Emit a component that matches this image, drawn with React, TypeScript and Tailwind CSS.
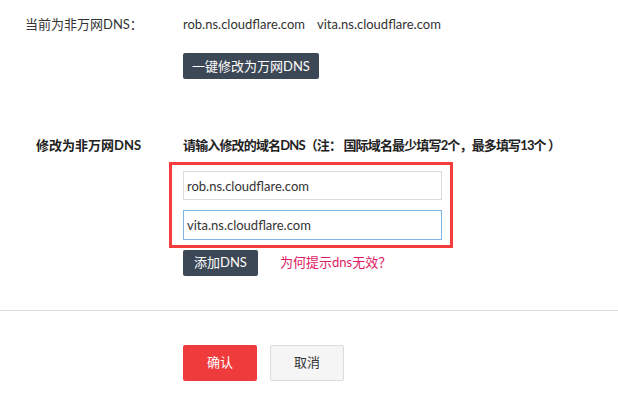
import React from "react";

const App = () => {
  return (
    <div
      className="w-[618px] h-[402px] bg-white text-[13px] text-[#333] overflow-hidden"
      style={{ fontFamily: 'Lato, "Noto Sans CJK SC", sans-serif' }}
    >
      <div className="flex pt-[14px]">
        <div className="w-[183px] pl-[25px] leading-[20px]">当前为非万网DNS：</div>
        <div className="flex flex-col">
          <div className="flex gap-[12px] leading-[20px]">
            <span>rob.ns.cloudflare.com</span>
            <span>vita.ns.cloudflare.com</span>
          </div>
          <button className="mt-[19px] w-[136px] h-[26px] rounded-[2px] bg-[#3d4857] text-white text-[13px] leading-[26px]">
            一键修改为万网DNS
          </button>
        </div>
      </div>

      <div className="flex mt-[56px]">
        <div className="w-[183px] pl-[36px] leading-[20px] font-bold text-[#222]">修改为非万网DNS</div>
        <div className="flex flex-col">
          <div className="leading-[20px] font-bold text-[#222] tracking-[-0.85px] whitespace-nowrap">
            请输入修改的域名DNS（注： 国际域名最少填写2个，最多填写13个 ）
          </div>
          <div className="ml-[-14px] mt-[7px] w-[284px] border-[3px] border-[#f53d3d] pl-[11px] pt-[6px] pb-[5px] flex flex-col gap-[10px]">
            <input
              readOnly
              value="rob.ns.cloudflare.com"
              className="w-[259px] h-[29px] px-[3px] border border-[#dcdcdc] text-[13px] text-[#333] outline-none"
            />
            <input
              readOnly
              value="vita.ns.cloudflare.com"
              className="w-[259px] h-[30px] px-[3px] border border-[#7db5e8] text-[13px] text-[#333] outline-none"
            />
          </div>
          <div className="flex items-center mt-[2px] gap-[22px]">
            <button className="w-[75px] h-[26px] rounded-[2px] bg-[#3d4857] text-white text-[13px]">
              添加DNS
            </button>
            <a className="text-[#dd1a62] text-[13px] cursor-pointer">为何提示dns无效？</a>
          </div>
        </div>
      </div>

      <div className="mt-[34px] border-t border-[#dddddd]" />

      <div className="flex gap-[13px] pl-[183px] mt-[34px]">
        <button className="w-[74px] h-[36px] rounded-[2px] bg-[#ef3b3b] text-white text-[13px]">确认</button>
        <button className="w-[74px] h-[36px] rounded-[2px] bg-[#f5f5f5] border border-[#dcdcdc] text-[#333] text-[13px]">
          取消
        </button>
      </div>
    </div>
  );
};

export default App;
